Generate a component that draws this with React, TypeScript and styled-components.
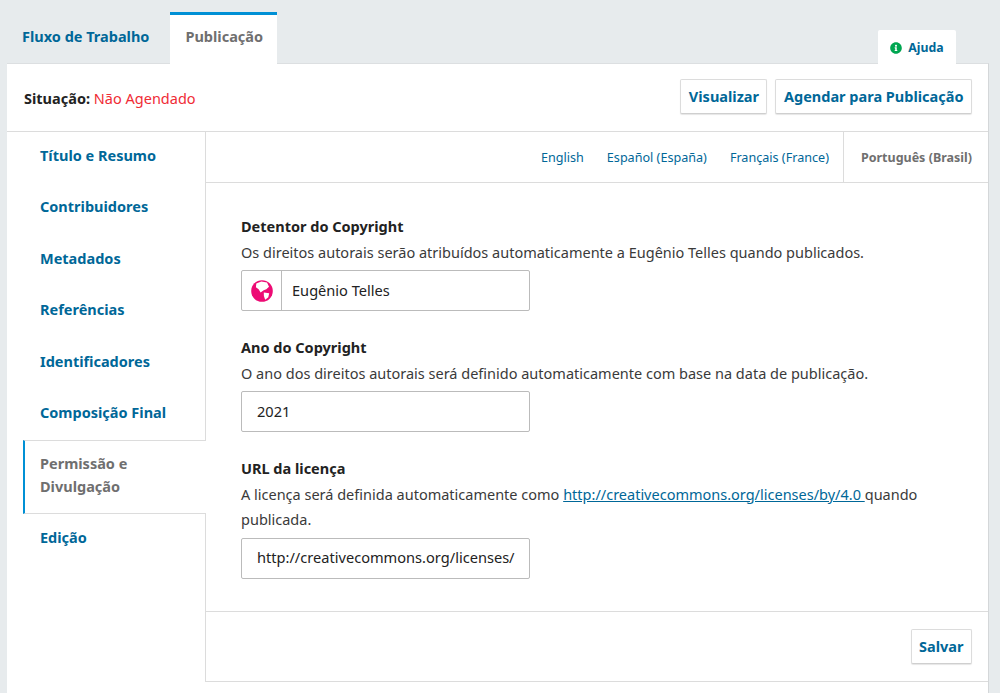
import styled, { createGlobalStyle } from "styled-components";
import { FaInfoCircle } from "react-icons/fa";

const GlobalStyle = createGlobalStyle`
  html, body {
    margin: 0;
    height: 100%;
    overflow: hidden;
    background: #e7ebed;
    font-family: "Noto Sans", sans-serif;
    font-size: 14.5px;
    color: #222;
  }
`;

const Page = styled.div`
  height: 693px;
  padding: 12px 11px 0 7px;
  box-sizing: border-box;
  display: flex;
  flex-direction: column;
`;

const TabBar = styled.div`
  height: 52px;
  flex: none;
  display: flex;
  align-items: flex-end;
  padding-left: 15px;
  position: relative;
  z-index: 1;
  margin-bottom: -1px;
`;

const Tab = styled.a<{ $active?: boolean }>`
  box-sizing: border-box;
  height: 52px;
  display: flex;
  align-items: center;
  font-weight: 700;
  font-size: 14.5px;
  padding: ${(p) => (p.$active ? "0 14px 7px 15px" : "0 21px 7px 0")};
  color: ${(p) => (p.$active ? "#6f6f6f" : "#006798")};
  background: ${(p) => (p.$active ? "#fff" : "transparent")};
  border-top: ${(p) => (p.$active ? "3px solid #0090d5" : "3px solid transparent")};
`;

const HelpTab = styled.a`
  box-sizing: border-box;
  margin-left: auto;
  margin-right: 33px;
  width: 78px;
  height: 34px;
  background: #fff;
  border-radius: 2px 2px 0 0;
  display: flex;
  align-items: center;
  justify-content: center;
  gap: 6px;
  padding-top: 1px;
  font-size: 12.3px;
  font-weight: 700;
  color: #006798;

  svg {
    color: #00a651;
    flex: none;
  }
`;

const Panel = styled.div`
  flex: 1;
  min-height: 0;
  background: #fff;
  border-top: 1px solid #dcdfe1;
  border-right: 1px solid #d4d7d9;
  display: flex;
  flex-direction: column;
`;

const StatusBar = styled.div`
  box-sizing: border-box;
  height: 68px;
  flex: none;
  display: flex;
  align-items: center;
  justify-content: space-between;
  padding: 0 16px 0 17px;
  border-bottom: 1px solid #dcdcdc;
`;

const Status = styled.div`
  font-size: 14.5px;
`;

const StatusLabel = styled.strong`
  font-weight: 700;
  color: #222;
`;

const StatusValue = styled.span`
  color: #f02b35;
`;

const Actions = styled.div`
  display: flex;
  gap: 8px;
  margin-top: -2px;
`;

const Button = styled.button`
  box-sizing: border-box;
  height: 35px;
  padding: 0 7.5px 2px;
  background: #fff;
  border: 1px solid #dcdcdc;
  border-bottom-color: #cfcfcf;
  border-radius: 2px;
  box-shadow: 0 1px 1px rgba(0, 0, 0, 0.1);
  font: 700 14.5px "Noto Sans", sans-serif;
  color: #006798;
`;

const Body = styled.div`
  flex: 1;
  min-height: 0;
  display: flex;
`;

const Sidebar = styled.nav`
  width: 198px;
  flex: none;
  padding: 0 0 0 16px;
  box-sizing: border-box;
  display: flex;
  flex-direction: column;
  position: relative;
  z-index: 1;
`;

const SideItem = styled.a<{ $active?: boolean }>`
  box-sizing: border-box;
  display: block;
  line-height: 23px;
  font-size: 14.5px;
  font-weight: 700;
  padding: ${(p) => (p.$active ? "11px 30px 15px 15px" : "12px 30px 16.4px 17px")};
  color: ${(p) => (p.$active ? "#6f6f6f" : "#006798")};
  background: #fff;
  ${(p) =>
    p.$active &&
    `
    border-left: 2px solid #0090d5;
    border-top: 1px solid #dcdcdc;
    border-bottom: 1px solid #dcdcdc;
    margin-right: -1px;
  `}
`;

const Content = styled.div`
  flex: 1;
  min-width: 0;
  border-left: 1px solid #dcdcdc;
  display: flex;
  flex-direction: column;
  align-self: flex-start;
  height: 550px;
  box-sizing: border-box;
  border-bottom: 1px solid #dcdcdc;
`;

const LocaleBar = styled.div`
  box-sizing: border-box;
  height: 51px;
  flex: none;
  display: flex;
  justify-content: flex-end;
  align-items: stretch;
  border-bottom: 1px solid #dcdcdc;
`;

const Locale = styled.a<{ $active?: boolean }>`
  display: flex;
  align-items: center;
  font-size: ${(p) => (p.$active ? "12.5px" : "12.6px")};
  padding: ${(p) => (p.$active ? "0 16px 0 17px" : "0 14px 0 9px")};
  color: ${(p) => (p.$active ? "#6f6f6f" : "#006798")};
  font-weight: ${(p) => (p.$active ? 700 : 400)};
  border-left: ${(p) => (p.$active ? "1px solid #dcdcdc" : "none")};
`;

const Form = styled.form`
  flex: 1;
  padding: 33px 28px 0 35px;
  box-sizing: border-box;
`;

const Field = styled.div`
  margin-bottom: 26px;
`;

const Label = styled.div`
  font-weight: 700;
  font-size: 14.5px;
  line-height: 21px;
  color: #222;
`;

const Description = styled.p`
  margin: 2.5px 0 5px;
  font-size: 14.5px;
  line-height: 25.5px;
  color: #3a3a3a;
`;

const Link = styled.a`
  color: #006798;
  text-decoration: underline;
`;

const InputBox = styled.div`
  box-sizing: border-box;
  width: 289px;
  height: 41px;
  display: flex;
  align-items: stretch;
  border: 1px solid #bbb;
  border-radius: 2px;
  background: #fff;
`;

const GlobeCell = styled.div`
  box-sizing: border-box;
  width: 40px;
  flex: none;
  border-right: 1px solid #bbb;
  display: flex;
  align-items: center;
  justify-content: center;
`;

const Input = styled.input`
  flex: 1;
  min-width: 0;
  border: none;
  outline: none;
  background: transparent;
  padding: 0 14px 2px 15px;
  font: 14.6px "Noto Sans", sans-serif;
  color: #222;
`;

const GlobeInput = styled(Input)`
  padding-left: 10px;
`;

const Footer = styled.div`
  box-sizing: border-box;
  height: 70px;
  flex: none;
  display: flex;
  align-items: center;
  justify-content: flex-end;
  padding: 0 16px 0 0;
  border-top: 1px solid #dcdcdc;
`;

const GlobeIcon = () => (
  <svg width="22" height="22" viewBox="0 0 22 22" aria-hidden="true">
    <circle cx="11" cy="11" r="10.8" fill="#ed0b74" />
    <path
      d="M5.3 3.6 10.3 1.4 16 2.6 18 6.7 15.3 9.3 12.7 10.2 9.6 12.4 7.6 9.3 4.9 7.3Z"
      fill="#fff"
    />
    <path d="M12.8 12.6 18.2 13.3 17.3 17.2 14.2 19.8 12.9 16Z" fill="#fff" />
  </svg>
);

const sections = [
  "Título e Resumo",
  "Contribuidores",
  "Metadados",
  "Referências",
  "Identificadores",
  "Composição Final",
];

const locales = ["English", "Español (España)", "Français (France)"];

const App = () => (
  <>
    <GlobalStyle />
    <Page>
      <TabBar>
        <Tab>Fluxo de Trabalho</Tab>
        <Tab $active>Publicação</Tab>
        <HelpTab>
          <FaInfoCircle size={12} />
          Ajuda
        </HelpTab>
      </TabBar>
      <Panel>
        <StatusBar>
          <Status>
            <StatusLabel>Situação:</StatusLabel> <StatusValue>Não Agendado</StatusValue>
          </Status>
          <Actions>
            <Button>Visualizar</Button>
            <Button>Agendar para Publicação</Button>
          </Actions>
        </StatusBar>
        <Body>
          <Sidebar>
            {sections.map((s) => (
              <SideItem key={s}>{s}</SideItem>
            ))}
            <SideItem $active>Permissão e Divulgação</SideItem>
            <SideItem>Edição</SideItem>
          </Sidebar>
          <Content>
            <LocaleBar>
              {locales.map((l) => (
                <Locale key={l}>{l}</Locale>
              ))}
              <Locale $active>Português (Brasil)</Locale>
            </LocaleBar>
            <Form>
              <Field>
                <Label>Detentor do Copyright</Label>
                <Description>
                  Os direitos autorais serão atribuídos automaticamente a Eugênio Telles quando publicados.
                </Description>
                <InputBox>
                  <GlobeCell>
                    <GlobeIcon />
                  </GlobeCell>
                  <GlobeInput defaultValue="Eugênio Telles" />
                </InputBox>
              </Field>
              <Field>
                <Label>Ano do Copyright</Label>
                <Description>
                  O ano dos direitos autorais será definido automaticamente com base na data de publicação.
                </Description>
                <InputBox>
                  <Input defaultValue="2021" />
                </InputBox>
              </Field>
              <Field>
                <Label>URL da licença</Label>
                <Description>
                  A licença será definida automaticamente como{" "}
                  <Link>http://creativecommons.org/licenses/by/4.0 </Link>quando publicada.
                </Description>
                <InputBox>
                  <Input defaultValue="http://creativecommons.org/licenses/by/4.0" />
                </InputBox>
              </Field>
            </Form>
            <Footer>
              <Button>Salvar</Button>
            </Footer>
          </Content>
        </Body>
      </Panel>
    </Page>
  </>
);

export default App;
